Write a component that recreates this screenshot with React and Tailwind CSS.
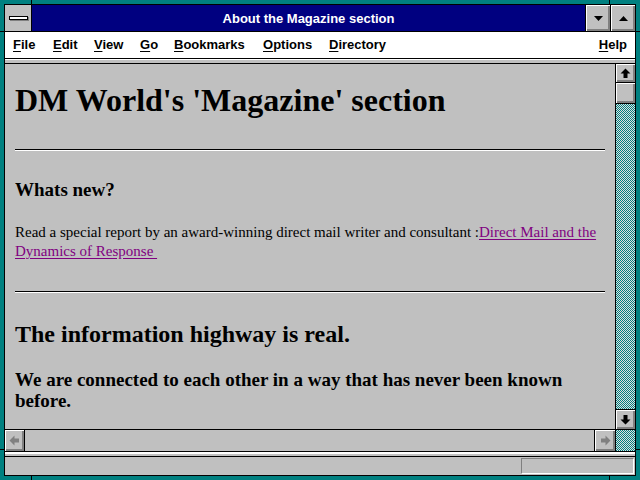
import { useState } from "react";

const bevel = "bg-[#c0c0c0] shadow-[inset_1px_1px_0_#fff,inset_-1px_-1px_0_#808080,inset_-2px_-2px_0_#808080]";

function Dither({ className = "" }) {
  // 1px checkerboard of teal and light gray, like the Win 3.1 scrollbar track
  return (
    <div className={`overflow-hidden ${className}`}>
      <svg width="100%" height="100%" shapeRendering="crispEdges">
        <defs>
          <pattern id="chk" width="2" height="2" patternUnits="userSpaceOnUse">
            <rect width="2" height="2" fill="#e0e0e0" />
            <rect x="0" y="0" width="1" height="1" fill="#008080" />
            <rect x="1" y="1" width="1" height="1" fill="#008080" />
          </pattern>
        </defs>
        <rect width="100%" height="100%" fill="url(#chk)" />
      </svg>
    </div>
  );
}

function Arrow({ dir = "up", color = "#000" }) {
  const rot = { up: 0, down: 180, left: 270, right: 90 }[dir];
  return (
    <svg width="11" height="11" viewBox="0 0 11 11" style={{ transform: `rotate(${rot}deg)` }}>
      <path d="M5.5 0.5 L10.5 5.5 L7.5 5.5 L7.5 10 L3.5 10 L3.5 5.5 L0.5 5.5 Z" fill={color} />
    </svg>
  );
}

function Tri({ up }) {
  return (
    <svg width="9" height="5" viewBox="0 0 9 5">
      {up ? <path d="M4.5 0 L9 5 L0 5 Z" fill="#000" /> : <path d="M0 0 L9 0 L4.5 5 Z" fill="#000" />}
    </svg>
  );
}

function MenuItem({ label, w }) {
  return (
    <div className={`${w} shrink-0`}>
      <span className="underline underline-offset-2">{label[0]}</span>
      {label.slice(1)}
    </div>
  );
}

export default function App() {
  const [menu] = useState([
    ["File", "w-[40px]"],
    ["Edit", "w-[41px]"],
    ["View", "w-[46px]"],
    ["Go", "w-[34px]"],
    ["Bookmarks", "w-[89px]"],
    ["Options", "w-[66px]"],
    ["Directory", "w-[100px]"],
  ]);

  return (
    <div className="relative w-[640px] h-[480px] bg-[#008080] p-[4px] overflow-hidden">
      {/* frame corner ticks */}
      <div className="absolute left-[31px] top-0 w-px h-[4px] bg-black" />
      <div className="absolute left-[609px] top-0 w-px h-[4px] bg-black" />
      <div className="absolute left-[31px] bottom-0 w-px h-[4px] bg-black" />
      <div className="absolute left-[609px] bottom-0 w-px h-[4px] bg-black" />
      <div className="absolute left-0 top-[31px] w-[4px] h-px bg-black" />
      <div className="absolute right-0 top-[31px] w-[4px] h-px bg-black" />
      <div className="absolute left-0 top-[449px] w-[4px] h-px bg-black" />
      <div className="absolute right-0 top-[449px] w-[4px] h-px bg-black" />

      <div className="flex flex-col h-full border border-black bg-[#c0c0c0]">
        {/* Title bar */}
        <div className="flex h-[27px] shrink-0 border-b border-black">
          <div className="w-[27px] border-r border-black bg-[#c0c0c0] flex items-center justify-center">
            <div className="w-[19px] h-[4px] bg-white border border-black shadow-[1px_1px_0_#808080]" />
          </div>
          <div
            className="flex-1 bg-[#000080] text-white font-bold text-[13px] flex items-center justify-center pt-px"
            style={{ fontFamily: '"Liberation Sans", Arial, sans-serif' }}
          >
            About the Magazine section
          </div>
          <div className={`w-[25px] border-l border-black flex items-center justify-center ${bevel}`}>
            <Tri />
          </div>
          <div className={`w-[25px] border-l border-black flex items-center justify-center ${bevel}`}>
            <Tri up />
          </div>
        </div>

        {/* Menu bar */}
        <div
          className="flex items-center h-[27px] shrink-0 bg-white border-b border-black pl-[8px] pr-[8px] text-[13px] font-bold text-black"
          style={{ fontFamily: '"Liberation Sans", Arial, sans-serif' }}
        >
          {menu.map(([l, w]) => (
            <MenuItem key={l} label={l} w={w} />
          ))}
          <div className="flex-1" />
          <MenuItem label="Help" w="w-auto" />
        </div>

        {/* toolbar strip */}
        <div className="h-[5px] shrink-0 border-t border-white border-b border-b-black bg-[#c0c0c0]" />

        {/* Content + vertical scrollbar */}
        <div className="flex h-[366px] shrink-0 border-b border-black">
          <div
            className="flex-1 overflow-hidden px-[10px] text-black bg-[#c0c0c0]"
            style={{ fontFamily: '"Liberation Serif", "Times New Roman", serif' }}
          >
            <h1 className="text-[32px] font-bold leading-[35px] mt-[19px]">DM World's 'Magazine' section</h1>
            <div className="mt-[31px] border-t border-black border-b border-b-white" />
            <h3 className="text-[19px] font-bold leading-[21px] mt-[28px]">Whats new?</h3>
            <p className="text-[15px] leading-[19px] mt-[23px]">
              Read a special report by an award-winning direct mail writer and consultant :
              <span className="text-[#800080] underline underline-offset-2">Direct Mail and the Dynamics of Response&nbsp;</span>
            </p>
            <div className="mt-[30px] border-t border-black border-b border-b-white" />
            <h2 className="text-[24px] font-bold leading-[27px] mt-[28px]">The information highway is real.</h2>
            <h3 className="text-[19px] font-bold leading-[21px] mt-[21px]">
              We are connected to each other in a way that has never been known before.
            </h3>
          </div>
          <div className="w-[20px] border-l border-black flex flex-col">
            <div className={`h-[19px] border-b border-black flex items-center justify-center ${bevel}`}>
              <Arrow dir="up" />
            </div>
            <div className={`h-[21px] border-b border-black ${bevel}`} />
            <Dither className="flex-1" />
            <div className={`h-[20px] border-t border-black flex items-center justify-center ${bevel}`}>
              <Arrow dir="down" />
            </div>
          </div>
        </div>

        {/* Horizontal scrollbar */}
        <div className="flex h-[22px] shrink-0 border-b border-black">
          <div className={`w-[20px] border-r border-black flex items-center justify-center ${bevel}`}>
            <Arrow dir="left" color="#808080" />
          </div>
          <div className="flex-1 bg-[#c0c0c0]" />
          <div className={`w-[22px] border-l border-r border-black flex items-center justify-center ${bevel}`}>
            <Arrow dir="right" color="#808080" />
          </div>
          <Dither className="w-[19px]" />
        </div>

        {/* strip */}
        <div className="h-[5px] shrink-0 border-t-2 border-white border-b border-b-black bg-[#c0c0c0]" />

        {/* Status bar */}
        <div className="flex-1 flex items-center justify-end pr-[1px]">
          <div className="w-[113px] h-[16px] border-t border-l border-[#808080] border-b border-r border-b-white border-r-white" />
        </div>
      </div>
    </div>
  );
}
